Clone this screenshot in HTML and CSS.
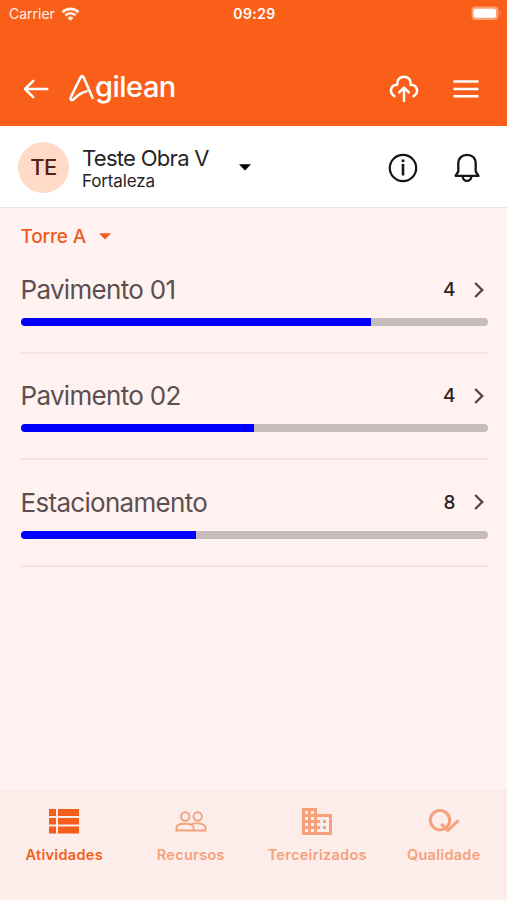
FILE: index.html
```
<!DOCTYPE html>
<html lang="pt-BR">
<head>
  <meta charset="utf-8">
  <title>Agilean</title>
  <meta name="viewport" content="width=device-width, initial-scale=1.0">
  <link rel="stylesheet" href="styles.css">
</head>
<body>
  <header class="top">
    <div class="status">
      <div class="carrier">
        <span>Carrier</span>
        <svg width="19" height="14" viewBox="0 0 18 14" fill="none" stroke="#fff" stroke-width="2.6">
          <path d="M1 5.2a11.4 11.4 0 0 1 16 0M3.8 8.4a7.4 7.4 0 0 1 10.4 0"/>
          <path d="M9 13.8l-2.9-2.9a4.1 4.1 0 0 1 5.800 0z" fill="#fff" stroke="none"/>
        </svg>
      </div>
      <span class="time">09:29</span>
      <svg class="battery" width="31" height="15" viewBox="0 0 31 15">
        <rect x=".5" y=".5" width="27" height="13.5" rx="4" fill="#fff" fill-opacity=".4"/>
        <rect x="2.500" y="2.800" width="22.500" height="9" rx="1.800" fill="#fff"/>
        <path d="M29 5.200q1.800 2 0 4z" fill="#fff" fill-opacity=".5"/>
      </svg>
    </div>
    <div class="appbar">
      <svg class="back" width="26" height="20" viewBox="0 0 26 20" fill="none" stroke="#fff" stroke-width="2.500" stroke-linecap="round" stroke-linejoin="round">
        <path d="M24.200 10H2M10.200 1.800L2 10l8.200 8.200"/>
      </svg>
      <div class="logo" aria-label="Agilean">
        <svg width="26" height="28" viewBox="0 0 26 28" fill="none" stroke="#fff" stroke-width="2.600" stroke-linecap="round" stroke-linejoin="round">
          <path d="M23.600 24L14.700 3.600Q13.100.7 11.400 3.600L2 22.700c-1.200 2.800.7 4.200 2.800 2.500C8.500 21.200 12 18.500 17.500 17.200"/>
        </svg>
        <span>gilean</span>
      </div>
      <svg class="cloud" width="30" height="28" viewBox="0 0 30 28" fill="none" stroke="#fff" stroke-width="2.500" stroke-linecap="round" stroke-linejoin="round">
        <path d="M5.400 21.200C-.2 17.500 1.200 10.200 8.300 9.800C7.200-1 22.800-1 21.700 9.800C28.800 10.200 30.200 17.500 24.600 21.200"/>
        <path d="M15 26V13M10.200 17.300L15 12.600l4.800 4.700"/>
      </svg>
      <svg class="menu" width="26" height="20" viewBox="0 0 26 20" stroke="#fff" stroke-width="2.400">
        <path d="M.5 2.500h25M.5 10h25M.5 17.200h25"/>
      </svg>
    </div>
  </header>

  <section class="project">
    <div class="avatar">TE</div>
    <div class="project-name">
      <div class="title">Teste Obra V</div>
      <div class="city">Fortaleza</div>
    </div>
    <svg class="caret" width="12" height="7" viewBox="0 0 12 7"><path d="M0 .3h12L6 6.500z"/></svg>
    <svg class="info" width="30" height="30" viewBox="0 0 30 30" fill="none" stroke="#151515" stroke-width="2.200">
      <circle cx="15" cy="15" r="13.200"/>
      <path d="M15 11v11.500" stroke-width="2.600"/>
      <circle cx="15" cy="7.800" r="1.500" fill="#151515" stroke="none"/>
    </svg>
    <svg class="bell" width="28" height="30" viewBox="0 0 28 30" fill="none" stroke="#151515" stroke-width="2.300" stroke-linejoin="round">
      <path d="M2.500 22.800L5.300 18.500V11C5.300 5 9 1.800 14 1.800S22.700 5 22.700 11v7.500l2.800 4.300z"/>
      <path d="M9.600 23c.2 6.600 8.600 6.600 8.800 0"/>
    </svg>
  </section>

  <main class="content">
    <div class="tower">
      <span>Torre A</span>
      <svg width="12" height="7" viewBox="0 0 12 7"><path d="M0 .3h12L6 6.500z"/></svg>
    </div>
    <div class="floor">
      <div class="row">
        <span class="name">Pavimento 01</span>
        <span class="count">4</span>
        <svg class="chevron" width="10" height="18" viewBox="0 0 10 18"><path d="M1.200 2l7 7-7 7"/></svg>
      </div>
      <div class="bar"><div class="fill" style="width: 75%"></div></div>
    </div>
    <div class="floor">
      <div class="row">
        <span class="name">Pavimento 02</span>
        <span class="count">4</span>
        <svg class="chevron" width="10" height="18" viewBox="0 0 10 18"><path d="M1.200 2l7 7-7 7"/></svg>
      </div>
      <div class="bar"><div class="fill" style="width: 50%"></div></div>
    </div>
    <div class="floor">
      <div class="row">
        <span class="name">Estacionamento</span>
        <span class="count">8</span>
        <svg class="chevron" width="10" height="18" viewBox="0 0 10 18"><path d="M1.200 2l7 7-7 7"/></svg>
      </div>
      <div class="bar"><div class="fill" style="width: 37.5%"></div></div>
    </div>
  </main>

  <nav class="tabs">
    <a class="tab active">
      <svg width="32" height="30" viewBox="0 0 32 30" fill="currentColor">
        <path d="M1 3h7v7H1zM10 3h21v7H10zM1 12h7v6.500H1zM10 12h21v6.500H10zM1 20.500h7v7H1zM10 20.500h21v7H10z"/>
      </svg>
      <span>Atividades</span>
    </a>
    <a class="tab">
      <svg width="32" height="30" viewBox="0 0 32 30" fill="none" stroke="currentColor" stroke-width="1.900">
        <circle cx="10.200" cy="10.500" r="4.200"/>
        <circle cx="22.700" cy="10.500" r="4.200"/>
        <path d="M1.500 24.500v-3c0-5 17-5 17 0v3zM15.500 18.700c5-2.300 15-1.500 15 2.800v3h-12"/>
      </svg>
      <span>Recursos</span>
    </a>
    <a class="tab">
      <svg width="32" height="30" viewBox="0 0 32 30" fill="currentColor" fill-rule="evenodd">
        <path d="M1 2h15v6h15v21H1zM4 5v3h3V5zM10 5v3h3V5zM4 11v3h3v-3zM10 11v3h3v-3zM4 17v3h3v-3zM10 17v3h3v-3zM4 23v3h3v-3zM10 23v3h3v-3zM16 11v3h3v3h-3v3h3v3h-3v3h12V11z"/>
        <path d="M22 14h3v3h-3zM22 20h3v3h-3z"/>
      </svg>
      <span>Terceirizados</span>
    </a>
    <a class="tab">
      <svg width="32" height="30" viewBox="0 0 32 30" fill="none" stroke="currentColor" stroke-width="3">
        <circle cx="12" cy="14.200" r="9.700"/>
        <path d="M13.300 18l6.500 6.500L30.500 14.300"/>
      </svg>
      <span>Qualidade</span>
    </a>
  </nav>
</body>
</html>
```
FILE: styles.css
```
* {
  box-sizing: border-box;
}
body {
  display: flex;
  flex-direction: column;
  height: 100vh;
  margin: 0;
  overflow: hidden;
  background-color: #fff2f1;
  font-family: Inter, "Liberation Sans", sans-serif;
}
svg {
  display: block;
  flex-shrink: 0;
}
.top {
  height: 126px;
  background-color: #fa5f1a;
  color: #fff;
}
.status {
  display: grid;
  grid-template-columns: 1fr auto 1fr;
  align-items: center;
  height: 27px;
  padding: 0 5px 0 9px;
  font-size: 14px;
}
.carrier {
  display: flex;
  align-items: center;
  gap: 6px;
  opacity: .9;
}
.time {
  margin-right: 2px;
  font-weight: 600;
  letter-spacing: .4px;
}
.battery {
  justify-self: end;
}
.appbar {
  display: flex;
  align-items: center;
  height: 63px;
  margin-top: 30px;
  padding: 0 28px 0 23px;
}
.logo {
  display: flex;
  align-items: center;
  margin: 0 0 3px 20px;
  font-size: 29px;
  line-height: 34px;
}
.logo svg {
  margin-top: 2px;
}
.logo span {
  font-weight: 500;
  letter-spacing: -.5px;
}
.cloud {
  margin-left: auto;
}
.menu {
  margin-left: 34px;
}
.project {
  display: flex;
  align-items: center;
  height: 82px;
  padding: 1px 26px 0 18px;
  background-color: #fff;
  border-bottom: 1px solid #eae5e6;
}
.avatar {
  width: 51px;
  height: 51px;
  border-radius: 50%;
  background-color: #ffdac7;
  color: #54211a;
  font-size: 22px;
  font-weight: 500;
  line-height: 51px;
  text-align: center;
  letter-spacing: -.5px;
}
.project-name {
  width: 144px;
  margin: 3px 0 0 13px;
  color: #252525;
}
.title {
  font-size: 22px;
  line-height: 26px;
  letter-spacing: -.7px;
  white-space: nowrap;
}
.city {
  font-size: 17px;
  line-height: 21px;
  letter-spacing: -.15px;
}
.caret {
  margin-left: 13px;
}
.info {
  margin: 2px 0 0 auto;
}
.bell {
  margin: 2px 0 0 35px;
}
.content {
  flex: 1;
  padding: 0 19.500px 0 20.500px;
}
.tower {
  display: flex;
  align-items: center;
  gap: 13px;
  height: 56px;
  color: #ef5b1e;
  font-size: 19px;
}
.tower span {
  font-weight: 500;
  letter-spacing: -.15px;
}
.tower svg {
  fill: #ef5b1e;
}
.floor {
  height: 106.300px;
}
.floor::after {
  content: "";
  display: block;
  height: 2px;
  margin-top: 26px;
  background-color: #f1e5e5;
}
.row {
  display: flex;
  align-items: center;
  height: 54px;
  padding: 0 4px 3px 0;
}
.name {
  flex: 1;
  color: #5b504f;
  font-size: 26px;
  letter-spacing: -.7px;
}
.count {
  color: #2a2424;
  font-size: 19px;
  font-weight: 500;
}
.chevron {
  margin-left: 18px;
  fill: none;
  stroke: #544847;
  stroke-width: 2.400;
}
.bar {
  height: 8px;
  border-radius: 4px;
  overflow: hidden;
  background-color: #c5bcbb;
}
.fill {
  height: 100%;
  background-color: #00f;
}
.tabs {
  display: grid;
  grid-template-columns: repeat(4, 1fr);
  height: 110px;
  padding: 15px 0 0 1px;
  background-color: #fdedea;
  border-top: 1px solid #f2e6e5;
}
.tab {
  display: flex;
  flex-direction: column;
  align-items: center;
  gap: 9px;
  color: #f5a17b;
  font-size: 14.500px;
  font-weight: 600;
  line-height: 20px;
  letter-spacing: .3px;
}
.active {
  color: #f55d1b;
}
```
